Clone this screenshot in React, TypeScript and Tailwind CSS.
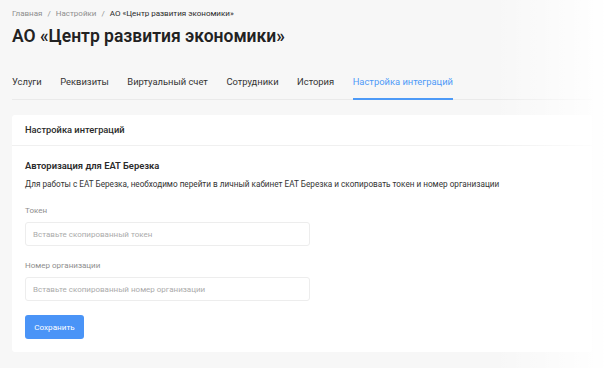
import React from "react"

const tabs = [
  "Услуги",
  "Реквизиты",
  "Виртуальный счет",
  "Сотрудники",
  "История",
  "Настройка интеграций",
]

function Field({ label, placeholder }: { label: string; placeholder: string }) {
  return (
    <div className="flex flex-col">
      <label className="text-[8px] leading-[12px] text-[#8e8e8e]">{label}</label>
      <input
        className="mt-[5px] h-[24px] w-[285px] rounded-[3px] border border-[#ededed] bg-white px-[7px] text-[8px] text-[#333] placeholder:text-[#ababab] outline-none"
        placeholder={placeholder}
      />
    </div>
  )
}

export default function App() {
  const active = "Настройка интеграций"
  return (
    <div
      className="relative min-h-[368px] w-[604px] overflow-hidden bg-[#f7f7f7] px-3 pt-[8px] pb-[17px] text-[#2a2a2a]"
      style={{ fontFamily: "Roboto, 'Noto Sans', sans-serif" }}
    >
      <nav className="flex items-center gap-[5px] text-[8px] leading-[12px] text-[#8e8e8e]">
        <span>Главная</span>
        <span>/</span>
        <span>Настройки</span>
        <span>/</span>
        <span className="text-[#2a2a2a]">АО «Центр развития экономики»</span>
      </nav>

      <h1 className="mt-[4px] text-[17.5px] leading-[24px] font-semibold text-[#222]">
        АО «Центр развития экономики»
      </h1>

      <div className="mt-[27px] flex gap-[18.5px] border-b border-[#eaeaea]">
        {tabs.map((tab) => (
          <div
            key={tab}
            className={
              tab === active
                ? "-mb-px border-b-2 border-[#4d9af7] pb-[8px] text-[9.4px] leading-[14px] text-[#4d9af7]"
                : "pb-[10px] text-[9.4px] leading-[14px] text-[#333]"
            }
          >
            {tab}
          </div>
        ))}
      </div>

      <div className="mt-[15px] rounded-[3px] bg-white">
        <div className="flex h-[31px] items-center border-b border-[#f0f0f0] px-[13px] text-[9.3px] font-medium text-[#2a2a2a]">
          Настройка интеграций
        </div>
        <div className="px-[13px] pt-[13px] pb-[13px]">
          <div className="text-[9.4px] leading-[14px] font-semibold text-[#2a2a2a]">
            Авторизация для ЕАТ Березка
          </div>
          <p className="mt-[5px] text-[8.2px] leading-[12px] text-[#333]">
            Для работы с ЕАТ Березка, необходимо перейти в личный кабинет ЕАТ Березка и скопировать токен и номер организации
          </p>
          <div className="mt-[15px]">
            <Field label="Токен" placeholder="Вставьте скопированный токен" />
          </div>
          <div className="mt-[14px]">
            <Field label="Номер организации" placeholder="Вставьте скопированный номер организации" />
          </div>
          <button className="mt-[14px] h-[24px] w-[59px] rounded-[3px] bg-[#4a94f7] text-[8.1px] text-white">
            Сохранить
          </button>
        </div>
      </div>

      <div className="pointer-events-none absolute inset-y-0 right-0 w-[110px] bg-linear-to-r from-white/0 to-white/95" />
    </div>
  )
}
